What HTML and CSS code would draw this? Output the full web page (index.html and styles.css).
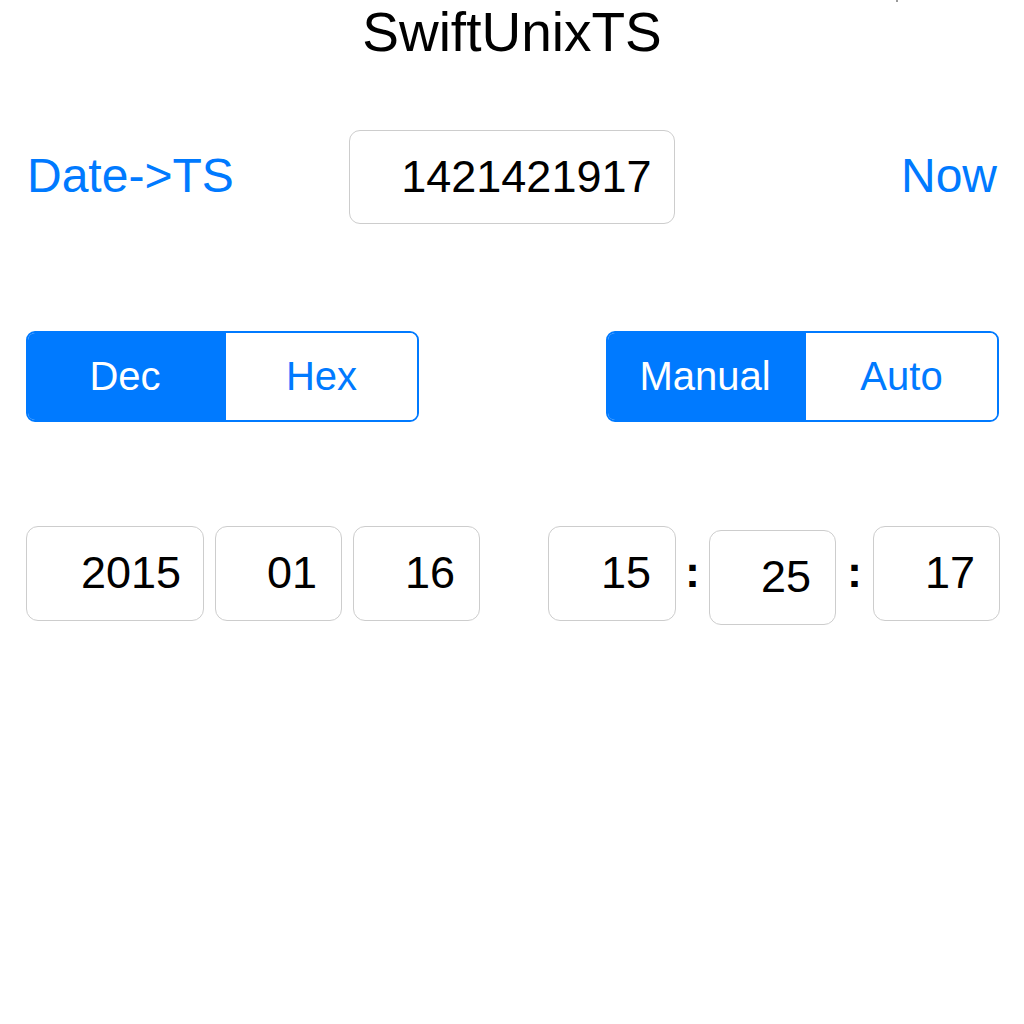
FILE: index.html
```html
<!DOCTYPE html>
<html>
<head>
<meta charset="utf-8">
<link rel="stylesheet" href="styles.css">
</head>
<body>
<div class="screen">
  <span class="status-dot"></span>
  <h1 class="title">SwiftUnixTS</h1>

  <div class="ts-row">
    <span class="link link-left">Date-&gt;TS</span>
    <div class="field ts-field"><span>1421421917</span></div>
    <span class="link link-right">Now</span>
  </div>

  <div class="seg-row">
    <div class="segmented">
      <div class="seg seg-on">Dec</div>
      <div class="seg">Hex</div>
    </div>
    <div class="segmented">
      <div class="seg seg-on">Manual</div>
      <div class="seg">Auto</div>
    </div>
  </div>

  <div class="dt-row">
    <div class="group date-group">
      <div class="field box box-year"><span>2015</span></div>
      <div class="field box"><span>01</span></div>
      <div class="field box"><span>16</span></div>
    </div>
    <div class="group time-group">
      <div class="field box box-hour"><span>15</span></div>
      <span class="colon">:</span>
      <div class="field box box-shift"><span>25</span></div>
      <span class="colon colon-wide">:</span>
      <div class="field box"><span>17</span></div>
    </div>
  </div>
</div>
</body>
</html>
```

FILE: styles.css
```css
* { box-sizing: border-box; }

html, body {
  margin: 0;
  padding: 0;
  background: #ffffff;
}

body {
  font-family: "Liberation Sans", Arial, Helvetica, sans-serif;
  color: #000000;
}

.screen {
  position: relative;
  width: 1024px;
  height: 1024px;
  display: flex;
  flex-direction: column;
}

.status-dot {
  position: absolute;
  top: 0;
  left: 896px;
  width: 2px;
  height: 2px;
  background: #9a9a9a;
}

.title {
  margin: 1px 0 0 0;
  font-size: 55px;
  line-height: 62px;
  font-weight: normal;
  text-align: center;
}

.ts-row {
  margin-top: 67px;
  padding: 0 27px 0 27px;
  display: grid;
  grid-template-columns: 1fr auto 1fr;
  align-items: baseline;
}

.link {
  font-size: 48px;
  color: #007aff;
}

.link-right { justify-self: end; }

.field {
  border: 1px solid #cdcdcd;
  border-radius: 11px;
  display: flex;
  align-items: center;
  justify-content: flex-end;
  font-size: 45px;
  color: #000;
}

.ts-field {
  width: 326px;
  height: 94px;
  padding: 0 22px 1px 0;
  margin-left: -1px;
}

.seg-row {
  margin-top: 107px;
  padding: 0 25px 0 26px;
  display: flex;
  justify-content: space-between;
}

.segmented {
  width: 393px;
  height: 91px;
  border: 2px solid #007aff;
  border-radius: 9px;
  overflow: hidden;
  display: flex;
}

.seg {
  flex: 1 1 0;
  display: flex;
  align-items: center;
  justify-content: center;
  font-size: 40px;
  color: #007aff;
  background: #ffffff;
}

.seg-on {
  flex-basis: 198px;
  flex-grow: 0;
  background: #007aff;
  color: #ffffff;
  padding-right: 4px;
}

.dt-row {
  margin-top: 104px;
  padding: 0 24px 0 26px;
  display: flex;
  justify-content: space-between;
  align-items: flex-start;
}

.group {
  display: flex;
  align-items: flex-start;
}

.date-group { gap: 11px; }

.box {
  width: 127px;
  height: 95px;
  padding: 0 24px 1px 0;
  border-radius: 12px;
}

.box-year { width: 178px; padding-right: 22px; }

.box-hour { width: 128px; }

.box-shift { margin-top: 4px; }

.colon {
  width: 33px;
  height: 95px;
  display: flex;
  align-items: center;
  justify-content: center;
  font-size: 45px;
  font-weight: bold;
  padding-bottom: 4px;
}

.colon-wide { width: 37px; }
```
